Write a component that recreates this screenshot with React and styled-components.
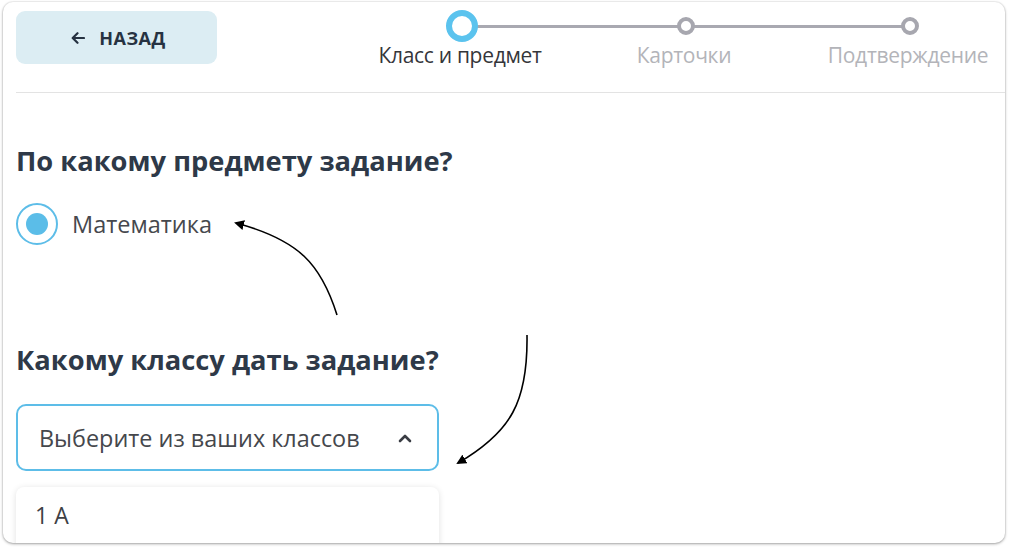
import React from "react";
import styled, { createGlobalStyle } from "styled-components";

const Global = createGlobalStyle`
  html, body { margin: 0; padding: 0; background: #ffffff; }
  body { font-family: "Open Sans", "Noto Sans", sans-serif; }
  * { box-sizing: border-box; }
`;

const Page = styled.div`
  width: 1010px;
  height: 550px;
  padding: 2px 5px 0 3px;
`;

const Card = styled.div`
  position: relative;
  width: 1002px;
  height: 541px;
  background: #fff;
  border-radius: 10px;
  box-shadow: 0 1px 3px rgba(0, 0, 0, 0.35), 0 0 0 1px rgba(0, 0, 0, 0.04);
  overflow: hidden;
`;

const Header = styled.div`
  display: flex;
  align-items: flex-start;
  height: 91px;
  margin-left: 13px;
  padding-top: 9px;
  border-bottom: 1.5px solid #e3e3e3;
`;

const BackButton = styled.button`
  width: 201px;
  height: 53px;
  border: none;
  border-radius: 9px;
  background: #dcedf3;
  color: #263241;
  font-family: "Open Sans", sans-serif;
  font-weight: 700;
  font-size: 18px;
  letter-spacing: 0.5px;
  display: flex;
  align-items: center;
  justify-content: center;
  gap: 14px;
  padding: 0 0 0 4px;
`;

const Stepper = styled.div`
  display: flex;
  gap: 44px;
  margin-left: 153px;
  margin-top: -9px;
`;

const Step = styled.div`
  position: relative;
  width: 180px;
  display: flex;
  flex-direction: column;
  align-items: center;
  &::after {
    content: "";
    display: ${(p) => (p.$last ? "none" : "block")};
    position: absolute;
    left: 92px;
    top: 23px;
    width: 224px;
    height: 2.5px;
    background: #a9a9b1;
  }
`;

const Dot = styled.div`
  position: relative;
  z-index: 1;
  margin-top: ${(p) => (p.$active ? "8px" : "15px")};
  margin-left: 4px;
  width: ${(p) => (p.$active ? "32px" : "18px")};
  height: ${(p) => (p.$active ? "32px" : "18px")};
  border-radius: 50%;
  background: #fff;
  border: ${(p) => (p.$active ? "6px solid #5bc3ee" : "4px solid #a7a7af")};
  margin-bottom: ${(p) => (p.$active ? "0px" : "7px")};
`;

const StepLabel = styled.div`
  font-family: "Open Sans", sans-serif;
  font-size: 21px;
  line-height: 26px;
  letter-spacing: -0.3px;
  color: ${(p) => (p.$active ? "#35363a" : "#b3b4b9")};
  white-space: nowrap;
`;

const Content = styled.div`
  padding: 50px 0 0 13px;
`;

const Heading = styled.h2`
  margin: 0;
  font-family: "Open Sans", sans-serif;
  font-weight: 700;
  font-size: 27.3px;
  line-height: 36px;
  color: #2e3948;
`;

const RadioRow = styled.label`
  display: flex;
  align-items: center;
  gap: 14px;
  margin-top: 24px;
  height: 42px;
`;

const RadioOuter = styled.span`
  width: 42px;
  height: 42px;
  border-radius: 50%;
  border: 2.5px solid #5dbde8;
  display: flex;
  align-items: center;
  justify-content: center;
`;

const RadioInner = styled.span`
  width: 22px;
  height: 22px;
  border-radius: 50%;
  background: #5bbde8;
`;

const OptionText = styled.span`
  font-family: "Open Sans", sans-serif;
  font-size: 23.5px;
  color: #46484d;
`;

const Section = styled.div`
  margin-top: ${(p) => p.$mt}px;
`;

const SelectBox = styled.div`
  margin-top: 26px;
  width: 423px;
  height: 67px;
  border: 2px solid #5dbde8;
  border-radius: 10px;
  display: flex;
  align-items: center;
  justify-content: space-between;
  padding: 0 25px 0 21px;
`;

const SelectText = styled.span`
  font-family: "Open Sans", sans-serif;
  font-size: 23.4px;
  color: #45474c;
`;

const Menu = styled.div`
  margin-top: 16px;
  width: 423px;
  height: 80px;
  background: #fff;
  border-radius: 8px;
  box-shadow: 0 1px 6px rgba(0, 0, 0, 0.12);
  padding: 14px 0 0 19px;
`;

const MenuItem = styled.div`
  font-family: "Open Sans", sans-serif;
  font-size: 23px;
  line-height: 28px;
  color: #3e4045;
`;

const Overlay = styled.svg`
  position: absolute;
  left: 0;
  top: 0;
  pointer-events: none;
`;

const steps = [
  { label: "Класс и предмет", active: true },
  { label: "Карточки" },
  { label: "Подтверждение" },
];

export default function App() {
  return (
    <>
      <Global />
      <Page>
        <Card>
          <Header>
            <BackButton>
              <svg width="14" height="12" viewBox="0 0 14 12" fill="none">
                <path d="M13 6H2M6.5 1.2L1.7 6l4.8 4.8" stroke="#263241" strokeWidth="2.2" strokeLinecap="round" strokeLinejoin="round" />
              </svg>
              НАЗАД
            </BackButton>
            <Stepper>
              {steps.map((s, i) => (
                <Step key={s.label} $last={i === steps.length - 1}>
                  <Dot $active={s.active} />
                  <StepLabel $active={s.active}>{s.label}</StepLabel>
                </Step>
              ))}
            </Stepper>
          </Header>
          <Content>
            <Heading>По какому предмету задание?</Heading>
            <RadioRow>
              <RadioOuter>
                <RadioInner />
              </RadioOuter>
              <OptionText>Математика</OptionText>
            </RadioRow>
            <Section $mt={97}>
              <Heading>Какому классу дать задание?</Heading>
              <SelectBox>
                <SelectText>Выберите из ваших классов</SelectText>
                <svg width="14" height="10" viewBox="0 0 14 10" fill="none">
                  <path d="M2 8l5-5 5 5" stroke="#3a3d44" strokeWidth="2.6" strokeLinecap="round" strokeLinejoin="round" />
                </svg>
              </SelectBox>
              <Menu>
                <MenuItem>1 А</MenuItem>
              </Menu>
            </Section>
          </Content>
          <Overlay width="1002" height="541" viewBox="0 0 1002 541">
            <defs>
              <marker id="ah" markerWidth="10" markerHeight="10" refX="8" refY="5" orient="auto" markerUnits="userSpaceOnUse">
                <path d="M0 0 L10 5 L0 10 Z" fill="#000" />
              </marker>
            </defs>
            <path d="M334 313 C 318 262, 296 238, 233 221" stroke="#000" strokeWidth="1.6" fill="none" markerEnd="url(#ah)" />
            <path d="M524 333 C 525 400, 508 430, 455 461" stroke="#000" strokeWidth="1.6" fill="none" markerEnd="url(#ah)" />
          </Overlay>
        </Card>
      </Page>
    </>
  );
}
